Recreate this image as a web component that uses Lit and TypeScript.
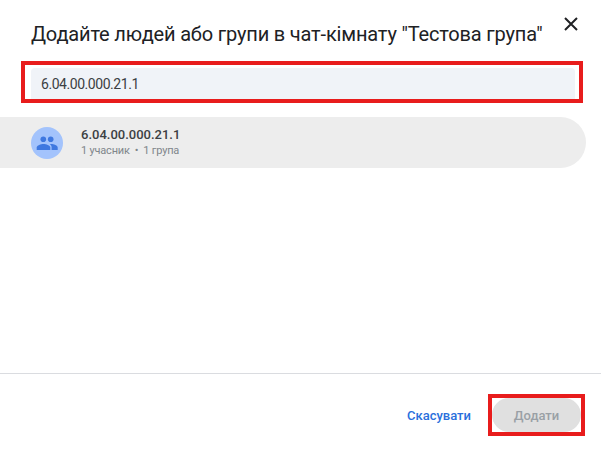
import { LitElement, html, css } from 'lit';
import { customElement } from 'lit/decorators.js';

@customElement('app-root')
export class AppRoot extends LitElement {
  static styles = css`
    :host {
      display: flex;
      flex-direction: column;
      width: 601px;
      height: 451px;
      background: #fff;
      font-family: Roboto, "Noto Sans", sans-serif;
      color: #202124;
      overflow: hidden;
    }
    .head {
      display: flex;
      justify-content: space-between;
      height: 61px;
      box-sizing: border-box;
      padding: 21px 20px 0 31px;
    }
    .title {
      margin: 0;
      font-size: 20px;
      font-weight: 400;
      line-height: 26px;
      letter-spacing: -0.17px;
      white-space: nowrap;
    }
    .close {
      width: 20px;
      height: 20px;
      margin-top: -7px;
      display: block;
    }
    .search {
      box-sizing: border-box;
      width: 562px;
      height: 42px;
      margin: 0 0 0 21px;
      padding: 3px 4px 0 6px;
      border: 4px solid #e81c1c;
    }
    .field {
      height: 31px;
      box-sizing: border-box;
      padding: 0 10px;
      display: flex;
      align-items: center;
      background: #f0f3f8;
      border-radius: 4px 4px 0 0;
      font-size: 14px;
      letter-spacing: -0.45px;
      color: #3c4043;
    }
    .row {
      display: flex;
      align-items: center;
      gap: 18px;
      box-sizing: border-box;
      width: 586px;
      height: 51px;
      margin-top: 14px;
      padding-left: 31px;
      background: #ededed;
      border-radius: 0 26px 26px 0;
    }
    .avatar {
      width: 32px;
      height: 32px;
      border-radius: 50%;
      background: #a3c3fc;
      display: flex;
      align-items: center;
      justify-content: center;
    }
    .avatar svg {
      width: 24px;
      height: 24px;
    }
    .name {
      font-size: 13px;
      font-weight: 500;
      line-height: 15px;
      margin-bottom: 2px;
      color: #3c4043;
    }
    .meta {
      font-size: 11px;
      line-height: 14px;
      letter-spacing: -0.2px;
      color: #80868b;
    }
    .spacer {
      flex: 1;
    }
    .foot {
      display: flex;
      justify-content: flex-end;
      align-items: center;
      gap: 17px;
      height: 78px;
      box-sizing: border-box;
      padding: 20px 16px 15px 0;
      border-top: 1px solid #dadce0;
    }
    .cancel {
      font-size: 13px;
      font-weight: 500;
      color: #2a6fdc;
    }
    .add-box {
      box-sizing: border-box;
      width: 97px;
      height: 42px;
      border: 4px solid #e81c1c;
    }
    .add {
      height: 100%;
      display: flex;
      align-items: center;
      justify-content: center;
      background: #e0e0e0;
      border-radius: 17px;
      font-size: 13px;
      font-weight: 500;
      color: #9aa0a6;
    }
  `;

  render() {
    return html`
      <div class="head">
        <h1 class="title">Додайте людей або групи в чат-кімнату "Тестова група"</h1>
        <svg class="close" viewBox="0 0 20 20" fill="none" stroke="#202124" stroke-width="2">
          <path d="M4 4l12 12M16 4L4 16" />
        </svg>
      </div>
      <div class="search"><div class="field">6.04.00.000.21.1</div></div>
      <div class="row">
        <div class="avatar">
          <svg viewBox="0 0 24 24" fill="#3f78e0">
            <circle cx="8.300" cy="8.300" r="2.800" />
            <circle cx="15.700" cy="8.300" r="2.800" />
            <path d="M1.700 19v-2.500c0-2.200 4.300-3.500 6.800-3.500s6.800 1.300 6.800 3.500V19z" />
            <path d="M16.600 19v-2.700c0-1.300-.7-2.400-1.800-3.200 3-.4 7.900 1 7.900 3.300V19z" />
          </svg>
        </div>
        <div>
          <div class="name">6.04.00.000.21.1</div>
          <div class="meta">1 учасник&nbsp; •&nbsp; 1 група</div>
        </div>
      </div>
      <div class="spacer"></div>
      <div class="foot">
        <span class="cancel">Скасувати</span>
        <div class="add-box"><div class="add">Додати</div></div>
      </div>
    `;
  }
}
